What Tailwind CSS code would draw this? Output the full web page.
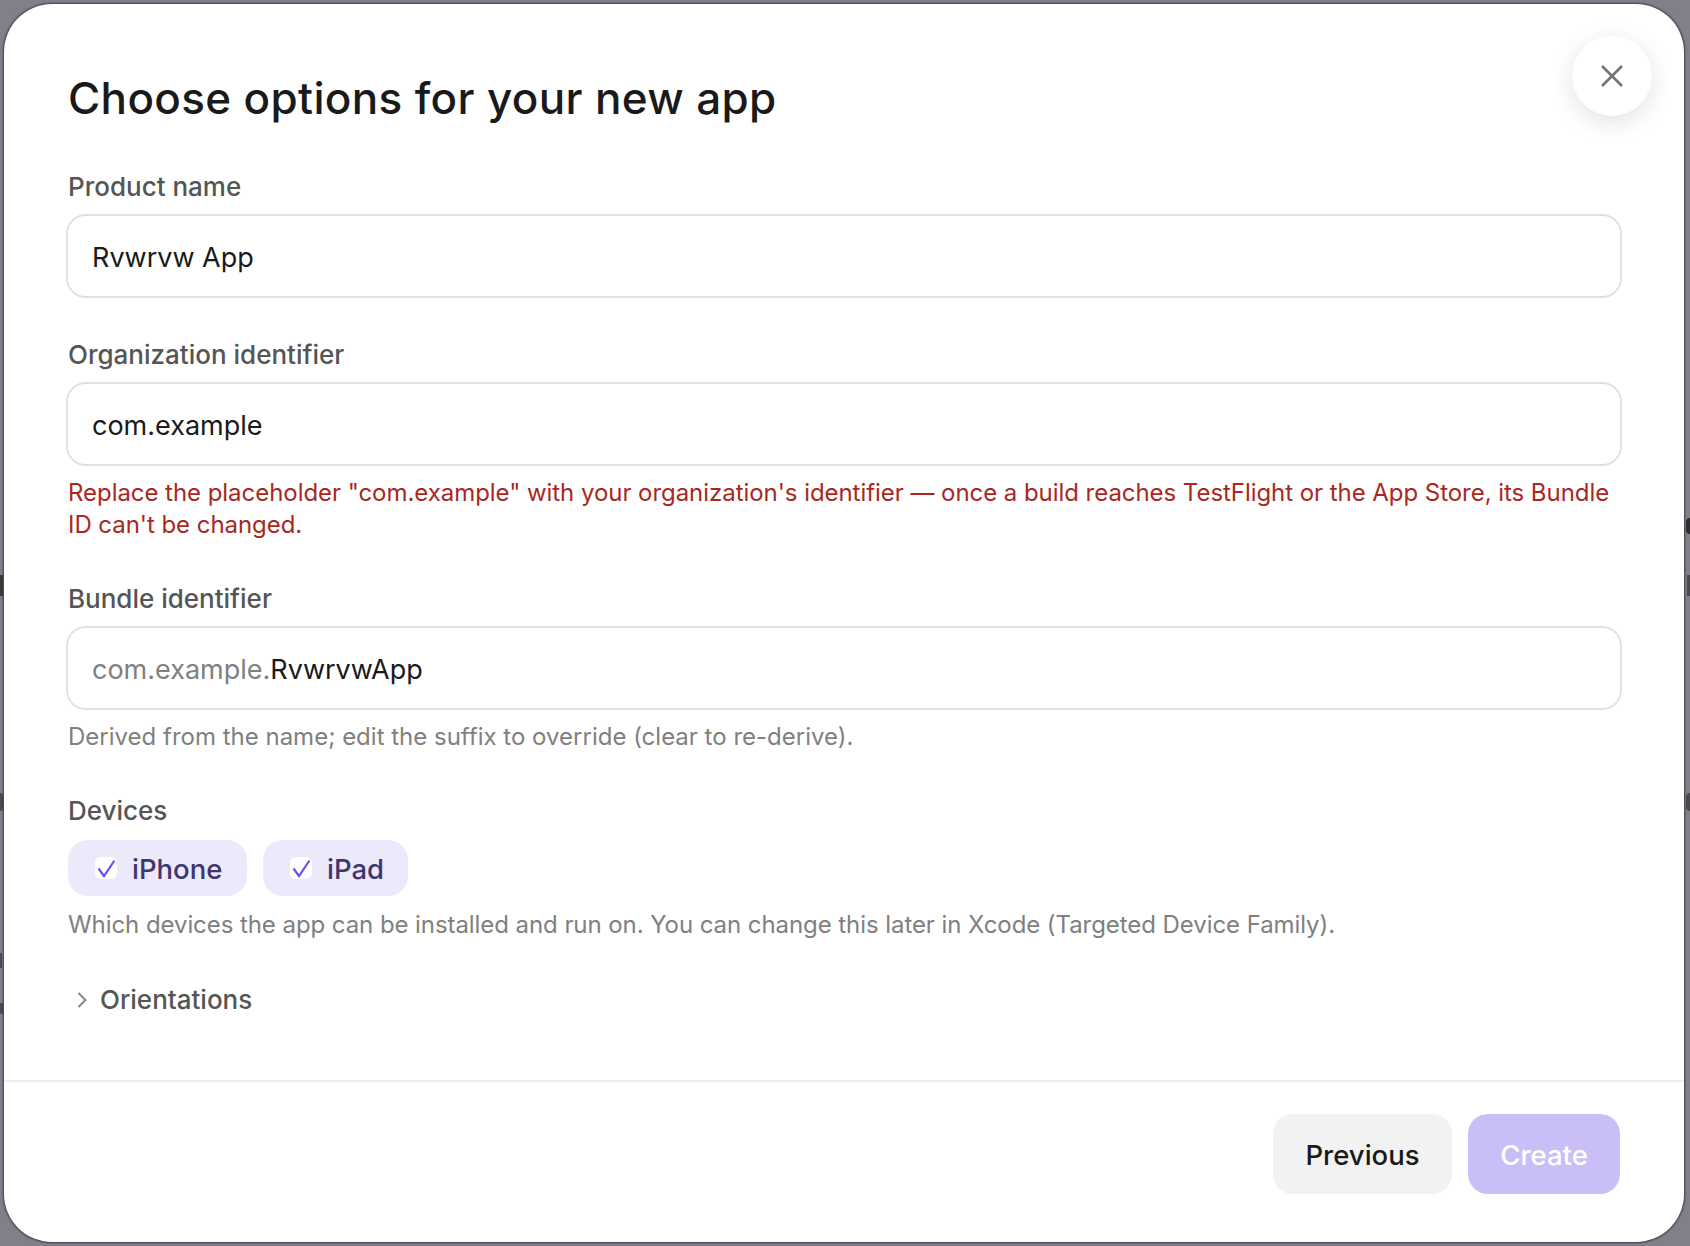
<!DOCTYPE html>
<html lang="en">
<head>
    <meta charset="UTF-8">
    <meta name="viewport" content="width=device-width, initial-scale=1.0">
    <title>Choose options for your new app</title>
    <script src="https://cdn.jsdelivr.net/npm/@tailwindcss/browser@4"></script>
</head>
<body class="relative h-screen overflow-hidden bg-[#80808b] font-['Inter',sans-serif] pt-[4px] pb-[4px] pl-[4px] pr-[6px]">
    <!-- Bits of the page behind the modal, showing at the edges -->
    <span class="absolute left-0 top-[575px] h-[21px] w-[3px] bg-[#3a3a40]"></span>
    <span class="absolute left-0 top-[793px] h-[18px] w-[3px] rounded-r-full bg-[#4a4a50]"></span>
    <span class="absolute left-0 top-[953px] h-[15px] w-[2px] bg-[#4a4a50]"></span>
    <span class="absolute left-0 top-[1003px] h-[11px] w-[3px] bg-[#4a4a50]"></span>
    <span class="absolute right-0 top-[518px] h-[16px] w-[4px] rounded-l-full bg-[#2e2e33]"></span>
    <span class="absolute right-0 top-[575px] h-[21px] w-[3px] bg-[#4a4a50]"></span>
    <span class="absolute right-0 top-[793px] h-[18px] w-[4px] rounded-l-full bg-[#4a4a50]"></span>

    <!-- Modal -->
    <div class="relative flex h-full flex-col rounded-[48px] bg-white shadow-[0_0_2px_1px_rgba(40,40,45,0.75)]">
        <button class="absolute right-[32px] top-[32px] flex h-[80px] w-[80px] items-center justify-center rounded-full bg-white shadow-[0_6px_24px_rgba(0,0,0,0.12)]">
            <svg class="h-[24px] w-[24px]" viewBox="0 0 24 24" fill="none" stroke="#737373" stroke-width="2.6"><path d="M2 2 22 22M22 2 2 22"/></svg>
        </button>

        <div class="flex-1 pl-[64px] pr-[64px]">
            <h1 class="pt-[64px] text-[44px] font-medium leading-[60px] tracking-[0.35px] text-[#1a1a1a]">Choose options for your new app</h1>

            <!-- Product name -->
            <label class="mt-[41px] block text-[26px] font-medium leading-[36px] text-[#555555]">Product name</label>
            <div class="-mx-[2px] mt-[9px] flex h-[84px] items-center rounded-[20px] border-2 border-[#e2e2e2] px-[24px] pt-[4px] text-[27px] text-[#1a1a1a]">Rvwrvw App</div>

            <!-- Organization identifier -->
            <label class="mt-[39px] block text-[26px] font-medium leading-[36px] text-[#555555]">Organization identifier</label>
            <div class="-mx-[2px] mt-[9px] flex h-[84px] items-center rounded-[20px] border-2 border-[#e2e2e2] px-[24px] pt-[4px] text-[27px] text-[#1a1a1a]">com.example</div>
            <p class="mt-[11px] text-[24px] leading-[32px] tracking-[-0.05px] text-[#a8281f]">Replace the placeholder "com.example" with your organization's identifier — once a build reaches TestFlight or the App Store, its Bundle ID can't be changed.</p>

            <!-- Bundle identifier -->
            <label class="mt-[40px] block text-[26px] font-medium leading-[36px] text-[#555555]">Bundle identifier</label>
            <div class="-mx-[2px] mt-[9px] flex h-[84px] items-center rounded-[20px] border-2 border-[#e2e2e2] px-[24px] pt-[4px] text-[27px] text-[#1a1a1a]"><span class="text-[#808080]">com.example.</span>RvwrvwApp</div>
            <p class="mt-[11px] text-[24px] leading-[32px] text-[#808080]">Derived from the name; edit the suffix to override (clear to re-derive).</p>

            <!-- Devices -->
            <label class="mt-[40px] block text-[26px] font-medium leading-[36px] text-[#555555]">Devices</label>
            <div class="mt-[11px] flex gap-[16px]">
                <div class="flex h-[56px] w-[179px] items-center gap-[15px] rounded-[20px] bg-[#ece9fa] pl-[27px] text-[27.5px] font-medium text-[#3f3670]">
                    <span class="flex h-[22px] w-[22px] items-center justify-center rounded-[6px] bg-white"><svg class="h-[22px] w-[22px]" viewBox="0 0 22 22" fill="none" stroke="#6b4ff0" stroke-width="2.2"><path d="M3.5 11.5 9 19 19.5 3.5"/></svg></span>
                    <span class="pt-[3px]">iPhone</span>
                </div>
                <div class="flex h-[56px] w-[145px] items-center gap-[15px] rounded-[20px] bg-[#ece9fa] pl-[27px] text-[27.5px] font-medium text-[#3f3670]">
                    <span class="flex h-[22px] w-[22px] items-center justify-center rounded-[6px] bg-white"><svg class="h-[22px] w-[22px]" viewBox="0 0 22 22" fill="none" stroke="#6b4ff0" stroke-width="2.2"><path d="M3.5 11.5 9 19 19.5 3.5"/></svg></span>
                    <span class="pt-[3px]">iPad</span>
                </div>
            </div>
            <p class="mt-[13px] text-[24px] leading-[32px] tracking-[-0.07px] text-[#808080]">Which devices the app can be installed and run on. You can change this later in Xcode (Targeted Device Family).</p>

            <!-- Orientations -->
            <div class="mt-[41px] flex items-center gap-[13px] text-[26px] font-medium leading-[36px] text-[#555555]">
                <svg class="ml-[9px] h-[16px] w-[10px]" viewBox="0 0 10 16" fill="none" stroke="#808080" stroke-width="1.8"><path d="M1.5 1 8.5 8 1.5 15"/></svg>
                Orientations
            </div>
        </div>

        <!-- Footer -->
        <div class="flex h-[162px] justify-end gap-[16px] border-t-2 border-[#eeeeee] pr-[64px] pt-[32px]">
            <button class="h-[80px] w-[179px] rounded-[20px] bg-[#f2f2f2] pt-[3px] text-[27.5px] font-medium text-[#1a1a1a]">Previous</button>
            <button class="h-[80px] w-[152px] rounded-[20px] bg-[#c9bff6] pt-[3px] text-[27.5px] font-medium text-white">Create</button>
        </div>
    </div>
</body>
</html>
